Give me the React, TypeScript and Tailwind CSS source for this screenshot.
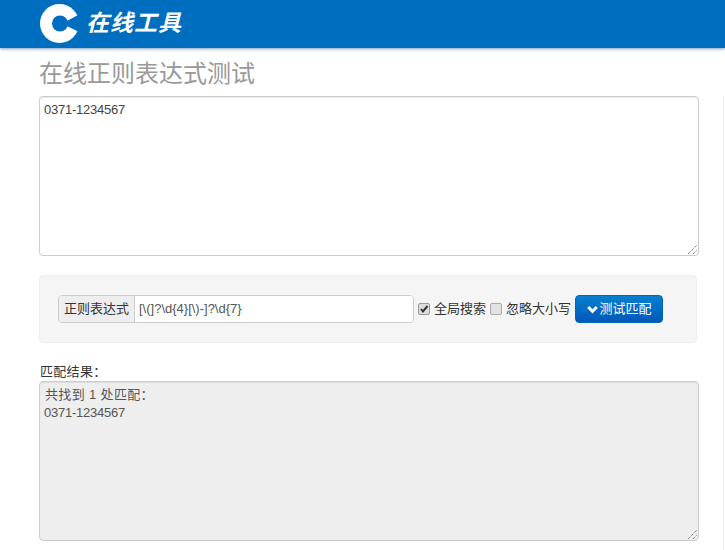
import React from "react";

const font = { fontFamily: '"Liberation Sans", "Noto Sans CJK SC", sans-serif' };

function Grip() {
  return (
    <svg className="absolute right-[1px] bottom-[1px]" width="9" height="9" viewBox="0 0 9 9">
      <path d="M0 9 L9 0 M5 9 L9 5" stroke="#555" strokeWidth="1" strokeDasharray="1 1" fill="none" />
    </svg>
  );
}

export default function App() {
  return (
    <div style={font} className="relative w-[725px] h-[550px] overflow-hidden bg-white text-[13px] text-[#444]">
      <header className="h-[48px] bg-[#006ebf] shadow-[0_1px_3px_rgba(0,70,120,0.5)] pl-[40px] flex items-center gap-[7px] relative">
        <svg width="40" height="39" viewBox="0 0 40 39" className="-mt-[2px]">
          <circle cx="19.5" cy="19.5" r="19.5" fill="#fff" />
          <circle cx="20" cy="19.5" r="8" fill="#006ebf" />
          <path d="M22 19.5 L40 10 L40 28.5 Z" fill="#006ebf" />
        </svg>
        <span className="text-white text-[23px] font-bold italic leading-none tracking-[1px] -mt-[2px] -ml-[1px]">在线工具</span>
      </header>
      <main className="pl-[39px] w-[699px]">
        <h1 className="text-[24px] leading-[26px] text-[#999] mt-[13px] mb-[9px] font-normal">在线正则表达式测试</h1>
        <div className="relative h-[160px] w-[660px] border border-[#ccc] rounded-[4px] bg-white shadow-[inset_0_1px_1px_rgba(0,0,0,0.075)] pl-[4px] pt-[4px] leading-[18px] tracking-[-0.25px]">
          0371-1234567
          <Grip />
        </div>
        <section className="mt-[19px] w-[658px] h-[68px] bg-[#f5f5f5] border border-[#eee] rounded-[4px] pl-[18px] flex items-center">
          <div className="flex h-[28px] w-[356px] border border-[#ccc] rounded-[4px] overflow-hidden">
            <span className="w-[76px] bg-[#eee] border-r border-[#ccc] flex items-center justify-center text-[#333] text-[13px]">正则表达式</span>
            <span className="flex-1 bg-white flex items-center pl-[4px] text-[#555] text-[13px]">{"[\\(]?\\d{4}[\\)-]?\\d{7}"}</span>
          </div>
          <span className="ml-[4px] w-[12px] h-[12px] bg-[#ddd] border border-[#999] rounded-[2px] flex items-center justify-center shrink-0">
            <svg width="10" height="10" viewBox="0 0 10 10">
              <path d="M2 5 L4 7.5 L8.5 2" stroke="#333" strokeWidth="2" fill="none" />
            </svg>
          </span>
          <span className="ml-[4px] text-[13px] text-[#333]">全局搜索</span>
          <span className="ml-[4px] w-[12px] h-[12px] bg-[#e2e2e2] border border-[#aaa] rounded-[2px] shrink-0" />
          <span className="ml-[4px] text-[13px] text-[#333]">忽略大小写</span>
          <button className="ml-[4px] w-[88px] h-[28px] rounded-[4px] border border-[#0067b5] bg-gradient-to-b from-[#0a7fd0] to-[#0058bb] text-white text-[13px] flex items-center justify-center gap-[2px]">
            <svg width="11" height="9" viewBox="0 0 11 9">
              <path d="M1.2 2 L5.5 6.3 L9.8 2" stroke="#fff" strokeWidth="3" fill="none" />
            </svg>
            测试匹配
          </button>
        </section>
        <div className="mt-[21px] pl-[1px] text-[13px] leading-[16px] text-[#333] h-[17px] tracking-[0.3px]">匹配结果：</div>
        <div className="relative h-[160px] w-[660px] border border-[#ccc] rounded-[4px] bg-[#eee] shadow-[inset_0_1px_1px_rgba(0,0,0,0.075)] pl-[4px] pt-[4px] leading-[18px] text-[#555]">
          <div className="pl-[1px] tracking-[0.35px]">共找到 1 处匹配：</div>
          <div className="tracking-[-0.25px]">0371-1234567</div>
          <Grip />
        </div>
      </main>
      <div className="absolute right-[1px] top-[96px] bottom-0 w-[1px] bg-[#f0f0f0]" />
    </div>
  );
}
